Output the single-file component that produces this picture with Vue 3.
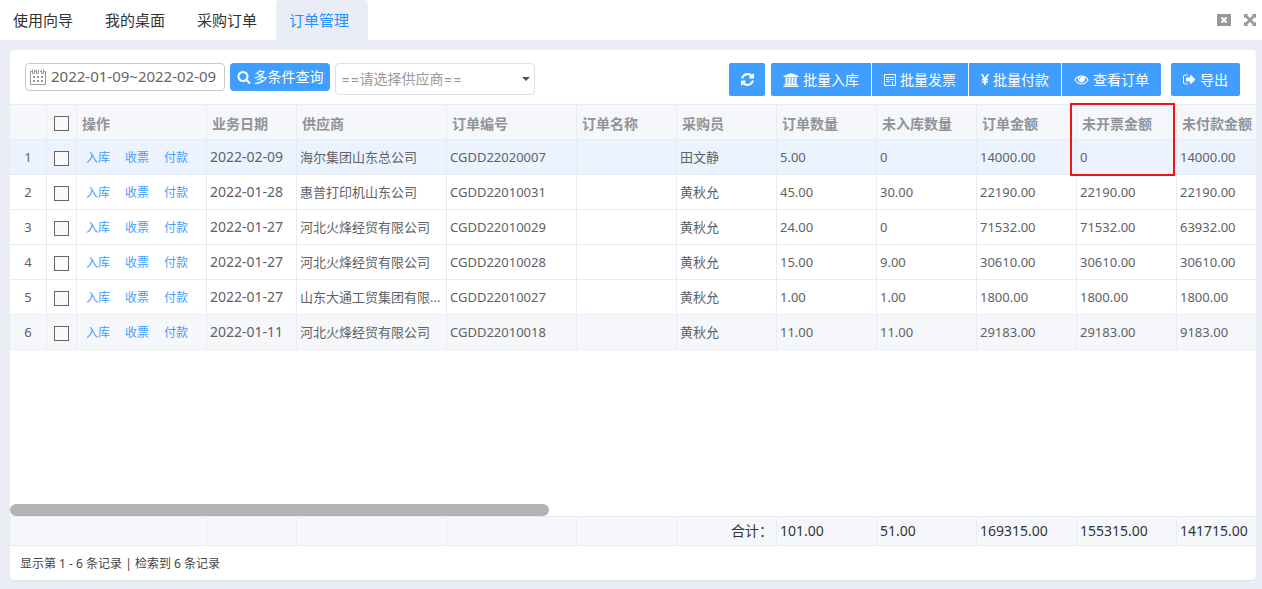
<script setup>
import { ref } from 'vue'

const tabs = ['使用向导', '我的桌面', '采购订单', '订单管理']
const activeTab = ref('订单管理')
const dateRange = ref('2022-01-09~2022-02-09')
const supplier = ref('')

const headers = ['业务日期', '供应商', '订单编号', '订单名称', '采购员', '订单数量', '未入库数量', '订单金额', '未开票金额', '未付款金额']
const actions = ['入库', '收票', '付款']
const rows = [
  ['2022-02-09', '海尔集团山东总公司', 'CGDD22020007', '', '田文静', '5.00', '0', '14000.00', '0', '14000.00'],
  ['2022-01-28', '惠普打印机山东公司', 'CGDD22010031', '', '黄秋允', '45.00', '30.00', '22190.00', '22190.00', '22190.00'],
  ['2022-01-27', '河北火烽经贸有限公司', 'CGDD22010029', '', '黄秋允', '24.00', '0', '71532.00', '71532.00', '63932.00'],
  ['2022-01-27', '河北火烽经贸有限公司', 'CGDD22010028', '', '黄秋允', '15.00', '9.00', '30610.00', '30610.00', '30610.00'],
  ['2022-01-27', '山东大通工贸集团有限...', 'CGDD22010027', '', '黄秋允', '1.00', '1.00', '1800.00', '1800.00', '1800.00'],
  ['2022-01-11', '河北火烽经贸有限公司', 'CGDD22010018', '', '黄秋允', '11.00', '11.00', '29183.00', '29183.00', '9183.00'],
]
const totals = ['', '', '', '', '合计：', '101.00', '51.00', '169315.00', '155315.00', '141715.00']
const columnClasses = ['c-date', 'c-supplier', 'c-code', 'c-std', 'c-std', 'c-std', 'c-std', 'c-std', 'c-std', 'c-std']
</script>

<template>
  <div class="page">
    <header class="topbar">
      <nav class="tabs">
        <button v-for="t in tabs" :key="t" type="button" class="tab" :class="{ active: t === activeTab }" @click="activeTab = t">{{ t }}</button>
      </nav>
      <div class="window-tools">
        <button type="button" class="tool" aria-label="关闭">
          <svg width="14" height="12" viewBox="0 0 14 12"><rect width="14" height="12" rx="1" fill="#999" /><path d="M4.500 3.500l5 5M9.500 3.500l-5 5" stroke="#fff" stroke-width="2" /></svg>
        </button>
        <button type="button" class="tool" aria-label="全屏">
          <svg width="12" height="12" viewBox="0 0 12 12"><path d="M0 0h4.500L0 4.500zM12 0v4.500L7.500 0zM0 12V7.500L4.500 12zM12 12H7.500L12 7.500z" fill="#999" /><path d="M1.500 1.500l9 9M10.500 1.500l-9 9" stroke="#999" stroke-width="2.500" /></svg>
        </button>
      </div>
    </header>

    <main class="panel">
      <div class="toolbar">
        <label class="date-box">
          <svg width="16" height="16" viewBox="0 0 16 16" fill="none" stroke="#999"><path d="M2 2.500H.5v13h15v-13H14M5 2.500h1M10 2.500h1M2.500.5v4h2v-4M6.500.5v4h2v-4M11.500.5v4h2v-4" /><path d="M3 8h2M7 8h2M11 8h2M3 12h2M7 12h2M11 12h2" stroke-width="2" /></svg>
          <input v-model="dateRange" type="text" aria-label="业务日期" />
        </label>
        <button type="button" class="btn search">
          <svg width="14" height="14" viewBox="0 0 1792 1792"><path d="M1216 832q0-185-131.500-316.500t-316.500-131.500-316.500 131.500-131.500 316.500 131.500 316.500 316.500 131.500 316.500-131.500 131.500-316.500zm512 832q0 52-38 90t-90 38q-54 0-90-38l-343-342q-179 124-399 124-143 0-273.500-55.500t-225-150-150-225-55.500-273.500 55.500-273.500 150-225 225-150 273.500-55.500 273.500 55.500 225 150 150 225 55.500 273.500q0 220-124 399l343 343q37 37 37 90z" /></svg>
          <span>多条件查询</span>
        </button>
        <div class="select-box">
          <select v-model="supplier" aria-label="供应商">
            <option value="">==请选择供应商==</option>
          </select>
          <svg class="caret" width="8" height="4" viewBox="0 0 8 4"><path d="M0 0h8L4 4z" fill="#555" /></svg>
        </div>

        <div class="right-tools">
          <button type="button" class="btn refresh" aria-label="刷新">
            <svg width="13" height="13" viewBox="128 128 1536 1536"><path d="M1639 1056q0 5-1 7-64 268-268 434.500t-478 166.500q-146 0-282.500-55t-243.500-157l-129 129q-19 19-45 19t-45-19-19-45v-448q0-26 19-45t45-19h448q26 0 45 19t19 45-19 45l-137 137q71 66 161 102t187 36q134 0 250-65t186-179q11-17 53-117 8-23 30-23h192q13 0 22.500 9.500t9.500 22.500zm25-800v448q0 26-19 45t-45 19h-448q-26 0-45-19t-19-45 19-45l138-138q-148-137-349-137-134 0-250 65t-186 179q-11 17-53 117-8 23-30 23h-199q-13 0-22.500-9.500t-9.500-22.500v-7q65-268 270-434.500t480-166.500q146 0 284 55.500t245 156.500l130-129q19-19 45-19t45 19 19 45z" /></svg>
          </button>
          <div class="group">
            <button type="button" class="btn">
              <svg width="16" height="14" viewBox="0 0 1920 1792"><path d="M960 0l960 384v128h-128q0 26-20.500 45t-48.500 19h-1526q-28 0-48.500-19t-20.500-45h-128v-128zm-704 640h256v768h128v-768h256v768h128v-768h256v768h128v-768h256v768h59q28 0 48.500 19t20.500 45v64h-1664v-64q0-26 20.500-45t48.500-19h59v-768zm1595 960q28 0 48.500 19t20.500 45v128h-1920v-128q0-26 20.500-45t48.500-19h1782z" /></svg>
              <span>批量入库</span>
            </button>
            <button type="button" class="btn">
              <svg width="12" height="12" viewBox="0 0 12 12"><path d="M.5 11.500V.5h11v11zM2 3.500h8M2 5.500h3M6 5.500h4M2 7.500h4M8.500 7.500V11" fill="none" stroke="#fff" /></svg>
              <span>批量发票</span>
            </button>
            <button type="button" class="btn">
              <svg width="8" height="11" viewBox="0 0 8 11"><path d="M.8 0L4 5.500 7.200 0M4 5v6M1 5.700h6M1 8h6" fill="none" stroke="#fff" stroke-width="1.700" /></svg>
              <span>批量付款</span>
            </button>
            <button type="button" class="btn">
              <svg width="15" height="14" viewBox="0 64 1792 1792"><path d="M1664 960q-152-236-381-353 61 104 61 225 0 185-131.500 316.500t-316.500 131.500-316.500-131.500-131.500-316.500q0-121 61-225-229 117-381 353 133 205 333.500 326.500t434.500 121.500 434.500-121.500 333.500-326.500zm-720-384q0-20-14-34t-34-14q-125 0-214.500 89.500t-89.500 214.500q0 20 14 34t34 14 34-14 14-34q0-86 61-147t147-61q20 0 34-14t14-34zm848 384q0 34-20 69-140 230-376.500 368.500t-499.500 138.500-499.500-139-376.500-368q-20-35-20-69t20-69q140-229 376.500-368t499.500-139 499.500 139 376.500 368q20 35 20 69z" /></svg>
              <span>查看订单</span>
            </button>
          </div>
          <button type="button" class="btn export">
            <svg width="13" height="13" viewBox="64 64 1664 1664"><path d="M704 1440q0 4 1 20t.5 26.500-3 23.500-10 19.500-20.500 6.500h-320q-119 0-203.500-84.500t-84.500-203.500v-704q0-119 84.500-203.500t203.500-84.500h320q13 0 22.500 9.500t9.500 22.500q0 4 1 20t.5 26.500-3 23.500-10 19.500-20.500 6.500h-320q-66 0-113 47t-47 113v704q0 66 47 113t113 47h312l11.500 1 11.500 3 8 5.500 7 9 2 13.500zm928-544q0 26-19 45l-544 544q-19 19-45 19t-45-19-19-45v-288h-448q-26 0-45-19t-19-45v-384q0-26 19-45t45-19h448v-288q0-26 19-45t45-19 45 19l544 544q19 19 19 45z" /></svg>
            <span>导出</span>
          </button>
        </div>
      </div>

      <div class="grid-area">
        <table class="grid">
          <colgroup>
            <col class="c-index" /><col class="c-check" /><col class="c-action" />
            <col v-for="(c, i) in columnClasses" :key="i" :class="c" />
          </colgroup>
          <thead>
            <tr>
              <th></th>
              <th class="check"><input type="checkbox" aria-label="全选" /></th>
              <th>操作</th>
              <th v-for="h in headers" :key="h">{{ h }}<span v-if="h === '未开票金额'" class="marker"></span></th>
            </tr>
          </thead>
          <tbody>
            <tr v-for="(row, r) in rows" :key="r" :class="{ selected: r === 0, shaded: r === 5 }">
              <td class="index">{{ r + 1 }}</td>
              <td class="check"><input type="checkbox" :aria-label="'选择第' + (r + 1) + '行'" /></td>
              <td><div class="links"><a v-for="a in actions" :key="a" href="#">{{ a }}</a></div></td>
              <td v-for="(cell, i) in row" :key="i" :class="{ date: i === 0 }">{{ cell }}</td>
            </tr>
          </tbody>
        </table>
      </div>

      <div class="scroll-track"><div class="scroll-thumb"></div></div>

      <div class="totals-area">
        <table class="grid totals">
          <colgroup>
            <col class="c-index" /><col class="c-check" /><col class="c-action" />
            <col v-for="(c, i) in columnClasses" :key="i" :class="c" />
          </colgroup>
          <tbody>
            <tr>
              <td colspan="3"></td>
              <td v-for="(t, i) in totals" :key="i" :class="{ sum: i === 4 }">{{ t }}</td>
            </tr>
          </tbody>
        </table>
      </div>
      <footer class="pager">显示第 1 - 6 条记录 | 检索到 6 条记录</footer>
    </main>
  </div>
</template>

<style>
body {
  background: #eaedf5;
}
</style>

<style scoped>
.page {
  min-height: 100vh;
  display: flex;
  flex-direction: column;
  overflow-x: clip;
  background: #eaedf5;
  color: #606266;
  font-family: "Noto Sans", "Noto Sans CJK SC", sans-serif;
  font-size: 13px;
}
.page * {
  box-sizing: border-box;
}
button,
input,
select {
  margin: 0;
  padding: 0;
  border: 0;
  font: inherit;
  background: none;
}
svg {
  flex: none;
  display: block;
}
.topbar {
  display: flex;
  justify-content: space-between;
  height: 40px;
  background: #fff;
}
.tabs {
  display: flex;
}
.tab {
  padding: 0 19px 0 13px;
  border-radius: 4px 4px 0 0;
  font-size: 15px;
  line-height: 40px;
  color: #333;
  white-space: nowrap;
}
.tab.active {
  background: #eaedf5;
  color: #1e90ff;
}
.window-tools {
  display: flex;
  align-items: center;
  gap: 13px;
  padding-right: 6px;
}
.panel {
  flex: 1;
  display: flex;
  flex-direction: column;
  margin: 10px 6px 9px 10px;
  border-radius: 4px;
  background: #fff;
  box-shadow: 0 1px 1px #dcdfe8;
}
.toolbar {
  display: flex;
  align-items: flex-start;
  gap: 5px;
  height: 54px;
  padding: 13px 16px 0 15px;
}
.date-box {
  display: flex;
  align-items: center;
  gap: 5px;
  width: 200px;
  height: 28px;
  padding: 0 4px;
  border: 1px solid #c8c8c8;
  border-radius: 4px;
}
.date-box input {
  flex: 1;
  min-width: 0;
  padding-bottom: 2px;
  outline: 0;
  color: #666;
  font-size: 15px;
}
.btn {
  display: flex;
  align-items: center;
  justify-content: center;
  gap: 4px;
  height: 33px;
  padding: 0 12px;
  background: #409eff;
  color: #fff;
  fill: #fff;
  font-size: 14px;
  white-space: nowrap;
}
.btn span {
  padding-bottom: 2px;
}
.search {
  width: 100px;
  height: 28px;
  padding: 0;
  gap: 3px;
  border-radius: 4px;
}
.select-box {
  position: relative;
  width: 200px;
}
.select-box select {
  width: 100%;
  height: 32px;
  padding: 0 5px 2px;
  appearance: none;
  border: 1px solid #dcdfe6;
  border-radius: 4px;
  background: #fff;
  color: #999;
  font-family: Inter, "Noto Sans CJK SC", sans-serif;
  font-size: 14px;
}
.caret {
  position: absolute;
  right: 5px;
  top: 14px;
  pointer-events: none;
}
.right-tools {
  display: flex;
  margin-left: auto;
}
.refresh {
  width: 36px;
  margin-right: 6px;
  padding: 0;
  border-radius: 2px;
}
.group {
  display: flex;
  gap: 1px;
  margin-right: 10px;
}
.group .btn:first-child {
  border-radius: 2px 0 0 2px;
}
.group .btn:last-child {
  border-radius: 0 2px 2px 0;
}
.export {
  border-radius: 2px;
}
.grid-area {
  flex: 1;
  overflow-x: clip;
}
.totals-area {
  overflow-x: clip;
}
.grid {
  width: 1267px;
  min-width: 100%;
  table-layout: fixed;
  border-collapse: separate;
  border-spacing: 0;
}
.c-index { width: 37px; }
.c-check { width: 30px; }
.c-action { width: 130px; }
.c-date { width: 90px; }
.c-supplier { width: 150px; }
.c-code { width: 130px; }
.c-std { width: 100px; }
th,
td {
  height: 35px;
  padding: 0 3px;
  border-right: 1px solid #e8ebf3;
  border-bottom: 1px solid #e8ebf3;
  line-height: 18px;
  text-align: left;
  white-space: nowrap;
}
th {
  position: relative;
  height: 36px;
  padding: 3px 5px 0;
  border-top: 1px solid #e8ebf3;
  background: #f5f7fa;
  color: #909399;
  font-size: 14px;
  font-weight: 700;
}
.marker {
  position: absolute;
  left: -7px;
  top: -2px;
  width: 105px;
  height: 73px;
  border: 2px solid #f01414;
  pointer-events: none;
}
.selected td {
  background: #ebf3ff;
}
.shaded td {
  background: #f5f7fa;
}
td.index {
  text-align: center;
}
.date {
  font-size: 14px;
}
.check {
  padding: 3px 0 0;
  text-align: center;
}
.check input {
  display: block;
  width: 15px;
  height: 15px;
  margin: 0 auto;
  appearance: none;
  border: 1px solid #666;
  background: #fafafa;
}
.links {
  display: flex;
  gap: 15px;
  padding: 2px 0 0 6px;
  font-size: 12px;
}
a {
  color: #409eff;
  text-decoration: none;
}
.scroll-track {
  height: 12px;
}
.scroll-thumb {
  width: 43.25%;
  height: 12px;
  border-radius: 6px;
  background: #b3b3b3;
}
.totals td {
  height: 30px;
  border-top: 1px solid #e8ebf3;
  background: #f5f7fa;
  color: #333;
  font-size: 14px;
}
.totals .sum {
  padding-right: 3px;
  text-align: right;
}
.pager {
  padding: 1px 10px 0;
  font-size: 12px;
  line-height: 33px;
  color: #444;
}
</style>
